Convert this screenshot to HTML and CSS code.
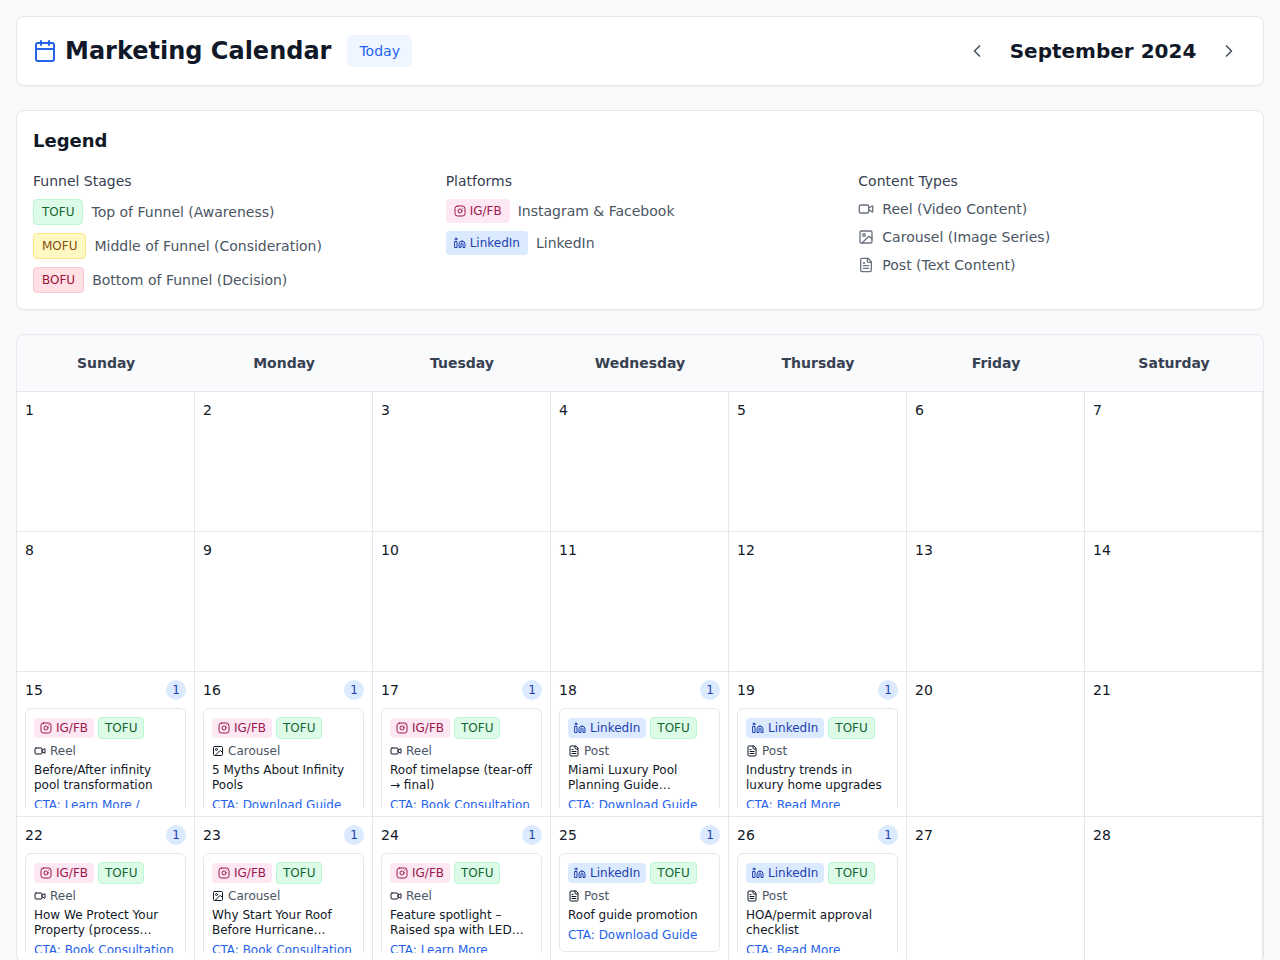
FILE: index.html
```
<!DOCTYPE html>
<html lang="en">
<head>
    <meta charset="UTF-8">
    <meta name="viewport" content="width=device-width, initial-scale=1.0">
    <title>Marketing Calendar</title>
    <link rel="stylesheet" href="styles.css">
</head>
<body>
    <!-- Icons -->
    <svg class="sprite" aria-hidden="true">
        <symbol id="calendar" viewBox="0 0 24 24"><path d="M8 2v4M16 2v4"/><rect x="3" y="4" width="18" height="18" rx="2"/><path d="M3 10h18"/></symbol>
        <symbol id="left" viewBox="0 0 24 24"><path d="m15 18-6-6 6-6"/></symbol>
        <symbol id="right" viewBox="0 0 24 24"><path d="m9 18 6-6-6-6"/></symbol>
        <symbol id="instagram" viewBox="0 0 24 24"><rect x="2" y="2" width="20" height="20" rx="5"/><path d="M16 11.37A4 4 0 1 1 12.63 8 4 4 0 0 1 16 11.37z"/><path d="M17.5 6.5h.01"/></symbol>
        <symbol id="linkedin" viewBox="0 0 24 24"><path d="M16 8a6 6 0 0 1 6 6v7h-4v-7a2 2 0 0 0-4 0v7h-4v-7a6 6 0 0 1 6-6z"/><rect x="2" y="9" width="4" height="12"/><circle cx="4" cy="4" r="2"/></symbol>
        <symbol id="video" viewBox="0 0 24 24"><path d="m16 13 5.223 3.482a.5.5 0 0 0 .777-.416V7.87a.5.5 0 0 0-.752-.432L16 10.5"/><rect x="2" y="6" width="14" height="12" rx="2"/></symbol>
        <symbol id="image" viewBox="0 0 24 24"><rect x="3" y="3" width="18" height="18" rx="2"/><circle cx="9" cy="9" r="2"/><path d="m21 15-3.086-3.086a2 2 0 0 0-2.828 0L6 21"/></symbol>
        <symbol id="file" viewBox="0 0 24 24"><path d="M15 2H6a2 2 0 0 0-2 2v16a2 2 0 0 0 2 2h12a2 2 0 0 0 2-2V7Z"/><path d="M14 2v4a2 2 0 0 0 2 2h4M10 9H8M16 13H8M16 17H8"/></symbol>
    </svg>

    <header class="panel header">
        <div class="header-left">
            <div class="brand">
                <svg class="icon icon-lg"><use href="#calendar"/></svg>
                <h1>Marketing Calendar</h1>
            </div>
            <button class="today-btn">Today</button>
        </div>
        <div class="month-nav">
            <button class="nav-btn" aria-label="Previous month"><svg class="icon icon-md"><use href="#left"/></svg></button>
            <h2>September 2024</h2>
            <button class="nav-btn" aria-label="Next month"><svg class="icon icon-md"><use href="#right"/></svg></button>
        </div>
    </header>

    <section class="panel legend">
        <h3>Legend</h3>
        <div class="legend-grid">
            <div class="legend-col">
                <h4>Funnel Stages</h4>
                <div class="legend-item"><span class="badge tofu">TOFU</span> Top of Funnel (Awareness)</div>
                <div class="legend-item"><span class="badge mofu">MOFU</span> Middle of Funnel (Consideration)</div>
                <div class="legend-item"><span class="badge bofu">BOFU</span> Bottom of Funnel (Decision)</div>
            </div>
            <div class="legend-col">
                <h4>Platforms</h4>
                <div class="legend-item"><span class="badge igfb"><svg class="icon"><use href="#instagram"/></svg>IG/FB</span> Instagram &amp; Facebook</div>
                <div class="legend-item"><span class="badge linkedin"><svg class="icon"><use href="#linkedin"/></svg>LinkedIn</span> LinkedIn</div>
            </div>
            <div class="legend-col">
                <h4>Content Types</h4>
                <div class="legend-item"><svg class="icon icon-sm"><use href="#video"/></svg> Reel (Video Content)</div>
                <div class="legend-item"><svg class="icon icon-sm"><use href="#image"/></svg> Carousel (Image Series)</div>
                <div class="legend-item"><svg class="icon icon-sm"><use href="#file"/></svg> Post (Text Content)</div>
            </div>
        </div>
    </section>

    <main class="panel calendar">
        <div class="week weekdays">
            <div>Sunday</div>
            <div>Monday</div>
            <div>Tuesday</div>
            <div>Wednesday</div>
            <div>Thursday</div>
            <div>Friday</div>
            <div>Saturday</div>
        </div>

        <div class="week">
            <div class="day"><div class="day-top">1</div></div>
            <div class="day"><div class="day-top">2</div></div>
            <div class="day"><div class="day-top">3</div></div>
            <div class="day"><div class="day-top">4</div></div>
            <div class="day"><div class="day-top">5</div></div>
            <div class="day"><div class="day-top">6</div></div>
            <div class="day"><div class="day-top">7</div></div>
        </div>

        <div class="week">
            <div class="day"><div class="day-top">8</div></div>
            <div class="day"><div class="day-top">9</div></div>
            <div class="day"><div class="day-top">10</div></div>
            <div class="day"><div class="day-top">11</div></div>
            <div class="day"><div class="day-top">12</div></div>
            <div class="day"><div class="day-top">13</div></div>
            <div class="day"><div class="day-top">14</div></div>
        </div>

        <div class="week">
            <div class="day">
                <div class="day-top">15 <span class="count">1</span></div>
                <div class="posts">
                    <article class="post">
                        <div class="badges"><span class="badge igfb"><svg class="icon"><use href="#instagram"/></svg>IG/FB</span><span class="badge tofu">TOFU</span></div>
                        <div class="type"><svg class="icon"><use href="#video"/></svg><span>Reel</span></div>
                        <p class="title">Before/After infinity pool transformation</p>
                        <p class="cta">CTA: Learn More /</p>
                    </article>
                </div>
            </div>
            <div class="day">
                <div class="day-top">16 <span class="count">1</span></div>
                <div class="posts">
                    <article class="post">
                        <div class="badges"><span class="badge igfb"><svg class="icon"><use href="#instagram"/></svg>IG/FB</span><span class="badge tofu">TOFU</span></div>
                        <div class="type"><svg class="icon"><use href="#image"/></svg><span>Carousel</span></div>
                        <p class="title">5 Myths About Infinity Pools</p>
                        <p class="cta">CTA: Download Guide</p>
                    </article>
                </div>
            </div>
            <div class="day">
                <div class="day-top">17 <span class="count">1</span></div>
                <div class="posts">
                    <article class="post">
                        <div class="badges"><span class="badge igfb"><svg class="icon"><use href="#instagram"/></svg>IG/FB</span><span class="badge tofu">TOFU</span></div>
                        <div class="type"><svg class="icon"><use href="#video"/></svg><span>Reel</span></div>
                        <p class="title">Roof timelapse (tear-off → final)</p>
                        <p class="cta">CTA: Book Consultation</p>
                    </article>
                </div>
            </div>
            <div class="day">
                <div class="day-top">18 <span class="count">1</span></div>
                <div class="posts">
                    <article class="post">
                        <div class="badges"><span class="badge linkedin"><svg class="icon"><use href="#linkedin"/></svg>LinkedIn</span><span class="badge tofu">TOFU</span></div>
                        <div class="type"><svg class="icon"><use href="#file"/></svg><span>Post</span></div>
                        <p class="title">Miami Luxury Pool Planning Guide…</p>
                        <p class="cta">CTA: Download Guide</p>
                    </article>
                </div>
            </div>
            <div class="day">
                <div class="day-top">19 <span class="count">1</span></div>
                <div class="posts">
                    <article class="post">
                        <div class="badges"><span class="badge linkedin"><svg class="icon"><use href="#linkedin"/></svg>LinkedIn</span><span class="badge tofu">TOFU</span></div>
                        <div class="type"><svg class="icon"><use href="#file"/></svg><span>Post</span></div>
                        <p class="title">Industry trends in luxury home upgrades</p>
                        <p class="cta">CTA: Read More</p>
                    </article>
                </div>
            </div>
            <div class="day"><div class="day-top">20</div></div>
            <div class="day"><div class="day-top">21</div></div>
        </div>

        <div class="week">
            <div class="day">
                <div class="day-top">22 <span class="count">1</span></div>
                <div class="posts">
                    <article class="post">
                        <div class="badges"><span class="badge igfb"><svg class="icon"><use href="#instagram"/></svg>IG/FB</span><span class="badge tofu">TOFU</span></div>
                        <div class="type"><svg class="icon"><use href="#video"/></svg><span>Reel</span></div>
                        <p class="title">How We Protect Your Property (process…</p>
                        <p class="cta">CTA: Book Consultation</p>
                    </article>
                </div>
            </div>
            <div class="day">
                <div class="day-top">23 <span class="count">1</span></div>
                <div class="posts">
                    <article class="post">
                        <div class="badges"><span class="badge igfb"><svg class="icon"><use href="#instagram"/></svg>IG/FB</span><span class="badge tofu">TOFU</span></div>
                        <div class="type"><svg class="icon"><use href="#image"/></svg><span>Carousel</span></div>
                        <p class="title">Why Start Your Roof Before Hurricane…</p>
                        <p class="cta">CTA: Book Consultation</p>
                    </article>
                </div>
            </div>
            <div class="day">
                <div class="day-top">24 <span class="count">1</span></div>
                <div class="posts">
                    <article class="post">
                        <div class="badges"><span class="badge igfb"><svg class="icon"><use href="#instagram"/></svg>IG/FB</span><span class="badge tofu">TOFU</span></div>
                        <div class="type"><svg class="icon"><use href="#video"/></svg><span>Reel</span></div>
                        <p class="title">Feature spotlight – Raised spa with LED…</p>
                        <p class="cta">CTA: Learn More</p>
                    </article>
                </div>
            </div>
            <div class="day">
                <div class="day-top">25 <span class="count">1</span></div>
                <div class="posts">
                    <article class="post">
                        <div class="badges"><span class="badge linkedin"><svg class="icon"><use href="#linkedin"/></svg>LinkedIn</span><span class="badge tofu">TOFU</span></div>
                        <div class="type"><svg class="icon"><use href="#file"/></svg><span>Post</span></div>
                        <p class="title">Roof guide promotion</p>
                        <p class="cta">CTA: Download Guide</p>
                    </article>
                </div>
            </div>
            <div class="day">
                <div class="day-top">26 <span class="count">1</span></div>
                <div class="posts">
                    <article class="post">
                        <div class="badges"><span class="badge linkedin"><svg class="icon"><use href="#linkedin"/></svg>LinkedIn</span><span class="badge tofu">TOFU</span></div>
                        <div class="type"><svg class="icon"><use href="#file"/></svg><span>Post</span></div>
                        <p class="title">HOA/permit approval checklist</p>
                        <p class="cta">CTA: Read More</p>
                    </article>
                </div>
            </div>
            <div class="day"><div class="day-top">27</div></div>
            <div class="day"><div class="day-top">28</div></div>
        </div>
    </main>
</body>
</html>
```
FILE: styles.css
```
* {
    box-sizing: border-box;
}
body {
    margin: 0;
    padding: 16px;
    display: flex;
    flex-direction: column;
    gap: 24px;
    background-color: #f9fafb;
    color: #111827;
    font-family: "DejaVu Sans", sans-serif;
    font-size: 14px;
    line-height: 20px;
}
h1, h2, h3, h4, p {
    margin: 0;
}
button {
    border: none;
    background: none;
    font-family: inherit;
    cursor: pointer;
}
.sprite {
    display: none;
}
.icon {
    width: 12px;
    height: 12px;
    flex-shrink: 0;
    fill: none;
    stroke: currentColor;
    stroke-width: 2;
    stroke-linecap: round;
    stroke-linejoin: round;
}
.icon-sm {
    width: 16px;
    height: 16px;
    color: #6b7280;
}
.icon-md {
    width: 20px;
    height: 20px;
}
.icon-lg {
    width: 24px;
    height: 24px;
    color: #2563eb;
}
.panel {
    background-color: #fff;
    border: 1px solid #e5e7eb;
    border-radius: 8px;
    box-shadow: 0 1px 2px rgba(0, 0, 0, 0.05);
}

/* Header */
.header {
    display: flex;
    align-items: center;
    justify-content: space-between;
    padding: 16px;
}
.header-left {
    display: flex;
    align-items: center;
    gap: 16px;
}
.month-nav {
    display: flex;
    align-items: center;
    gap: 12px;
}
.brand {
    display: flex;
    align-items: center;
    gap: 8px;
}
h1 {
    font-size: 24px;
    line-height: 32px;
}
h2 {
    min-width: 192px;
    font-size: 20px;
    line-height: 28px;
    text-align: center;
}
.today-btn {
    padding: 6px 12px;
    border-radius: 6px;
    background-color: #eff6ff;
    color: #2563eb;
    font-size: 14px;
    line-height: 20px;
}
.nav-btn {
    display: flex;
    padding: 8px;
    color: #4b5563;
}

/* Legend */
.legend {
    padding: 16px;
}
h3 {
    margin-bottom: 16px;
    font-size: 18px;
    line-height: 28px;
}
.legend-grid {
    display: grid;
    grid-template-columns: repeat(3, 1fr);
    gap: 24px;
}
.legend-col {
    display: flex;
    flex-direction: column;
    gap: 8px;
}
h4 {
    color: #374151;
    font-size: 14px;
    font-weight: 500;
}
.legend-item {
    display: flex;
    align-items: center;
    gap: 8px;
    color: #4b5563;
}
.badge {
    display: flex;
    align-items: center;
    gap: 4px;
    padding: 4px 8px;
    border-radius: 4px;
    font-size: 12px;
    line-height: 16px;
}
.tofu {
    background-color: #dcfce7;
    border: 1px solid #bbf7d0;
    color: #166534;
}
.mofu {
    background-color: #fef9c3;
    border: 1px solid #fde68a;
    color: #854d0e;
}
.bofu {
    background-color: #ffe0e4;
    border: 1px solid #fbc8d4;
    color: #9f1239;
}
.igfb {
    background-color: #fce7f3;
    color: #9d174d;
}
.linkedin {
    background-color: #dbeafe;
    color: #1e40af;
}

/* Calendar */
.calendar {
    overflow: hidden;
}
.week {
    display: grid;
    grid-template-columns: repeat(7, 1fr);
}
.weekdays {
    padding: 16px 0;
    background-color: #f9fafb;
    border-bottom: 1px solid #e5e7eb;
    color: #374151;
    font-weight: 600;
    line-height: 24px;
    text-align: center;
}
.day {
    min-width: 0;
    min-height: 140px;
    padding: 8px;
    border-right: 1px solid #e5e7eb;
    border-bottom: 1px solid #e5e7eb;
}
.day-top {
    display: flex;
    align-items: center;
    justify-content: space-between;
    margin-bottom: 8px;
}
.count {
    width: 20px;
    border-radius: 50%;
    background-color: #dbeafe;
    color: #1e40af;
    font-size: 12px;
    text-align: center;
}
.posts {
    max-height: 100px;
    overflow: hidden;
}
.post {
    display: flex;
    flex-direction: column;
    gap: 4px;
    padding: 8px;
    border: 1px solid #e5e7eb;
    border-radius: 6px;
    font-size: 12px;
    line-height: 16px;
}
.badges, .type {
    display: flex;
    align-items: center;
    gap: 4px;
}
.badges .badge {
    padding: 2px 6px;
}
.type span {
    color: #4b5563;
}
.title {
    line-height: 15px;
}
.cta {
    color: #2563eb;
}
```
